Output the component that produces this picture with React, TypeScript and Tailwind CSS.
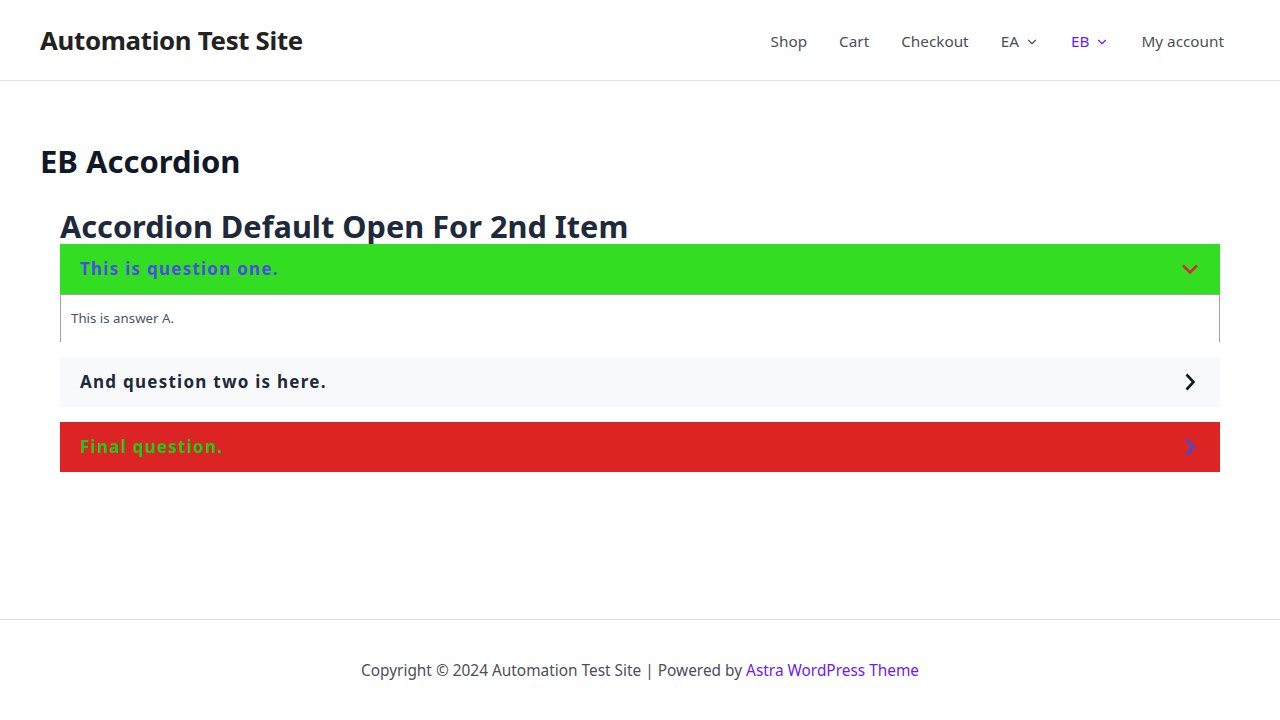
import { ChevronDown } from 'lucide-react';

function Chevron({ dir, className }: { dir: 'down' | 'right'; className: string }) {
  return (
    <svg viewBox="0 0 24 24" className={className} fill="none" stroke="currentColor" strokeWidth={2.6} strokeLinecap="butt" strokeLinejoin="miter">
      {dir === 'down' ? <path d="M5 8.5l7 7 7-7" /> : <path d="M8.5 4.5l7 7.5-7 7.5" />}
    </svg>
  );
}

const navItems = [
  { label: 'Shop' },
  { label: 'Cart' },
  { label: 'Checkout' },
  { label: 'EA', sub: true },
  { label: 'EB', sub: true, active: true },
  { label: 'My account' },
];

export default function App() {
  return (
    <div className="min-h-[720px] flex flex-col bg-white font-['Noto_Sans',sans-serif]">
      <header className="h-[81px] border-b border-[#e5e5e5] flex items-center justify-between pl-10 pr-10">
        <div className="text-[25.8px] font-bold text-[#222222] tracking-[-0.3px]">Automation Test Site</div>
        <nav className="flex items-center pt-[3px]">
          {navItems.map((item) => (
            <a
              key={item.label}
              className={`flex items-center px-4 text-[15.3px] ${item.active ? 'text-[#6b1bfa]' : 'text-[#4b4f58]'}`}
            >
              {item.label}
              {item.sub && <ChevronDown className="ml-[6px] w-[14px] h-[14px]" strokeWidth={2} />}
            </a>
          ))}
        </nav>
      </header>

      <main className="flex-1 px-10 pt-[60px]">
        <h1 className="text-[31px] font-bold text-[#111827] leading-[40px]">EB Accordion</h1>

        <div className="px-5 mt-[28px]">
          <h2 className="text-[30.7px] font-bold text-[#1e293b] leading-[35px]">
            Accordion Default Open For 2nd Item
          </h2>

          <div className="flex flex-col">
            <div>
              <div className="h-[50px] bg-[#33dd22] flex items-center justify-between pl-5 pr-[18px]">
                <span className="text-[17px] font-bold text-[#4a4ee0] tracking-[1.25px]">This is question one.</span>
                <Chevron dir="down" className="w-[24px] h-[24px] text-[#d12a3a]" />
              </div>
              <div className="h-[48px] border border-b-0 border-[#a0a0a0] px-[10px] pt-[14px] text-[13.3px] text-[#4b5563]">
                This is answer A.
              </div>
            </div>

            <div className="mt-[15px] h-[50px] bg-[#f8f9fa] flex items-center justify-between pl-5 pr-[18px]">
              <span className="text-[17px] font-bold text-[#1e293b] tracking-[1.25px]">And question two is here.</span>
              <Chevron dir="right" className="w-[24px] h-[24px] text-[#111827]" />
            </div>

            <div className="mt-[15px] h-[50px] bg-[#dd2424] flex items-center justify-between pl-5 pr-[18px]">
              <span className="text-[17px] font-bold text-[#22c51a] tracking-[1.25px]">Final question.</span>
              <Chevron dir="right" className="w-[24px] h-[24px] text-[#2b55e8]" />
            </div>
          </div>
        </div>
      </main>

      <footer className="h-[101px] border-t border-[#dddde5] flex items-center justify-center pt-[2px] text-[15.4px] text-[#4b4f58]">
        <span>
          Copyright © 2024 Automation Test Site | Powered by{' '}
          <a className="text-[#6b1bfa]">Astra WordPress Theme</a>
        </span>
      </footer>
    </div>
  );
}
